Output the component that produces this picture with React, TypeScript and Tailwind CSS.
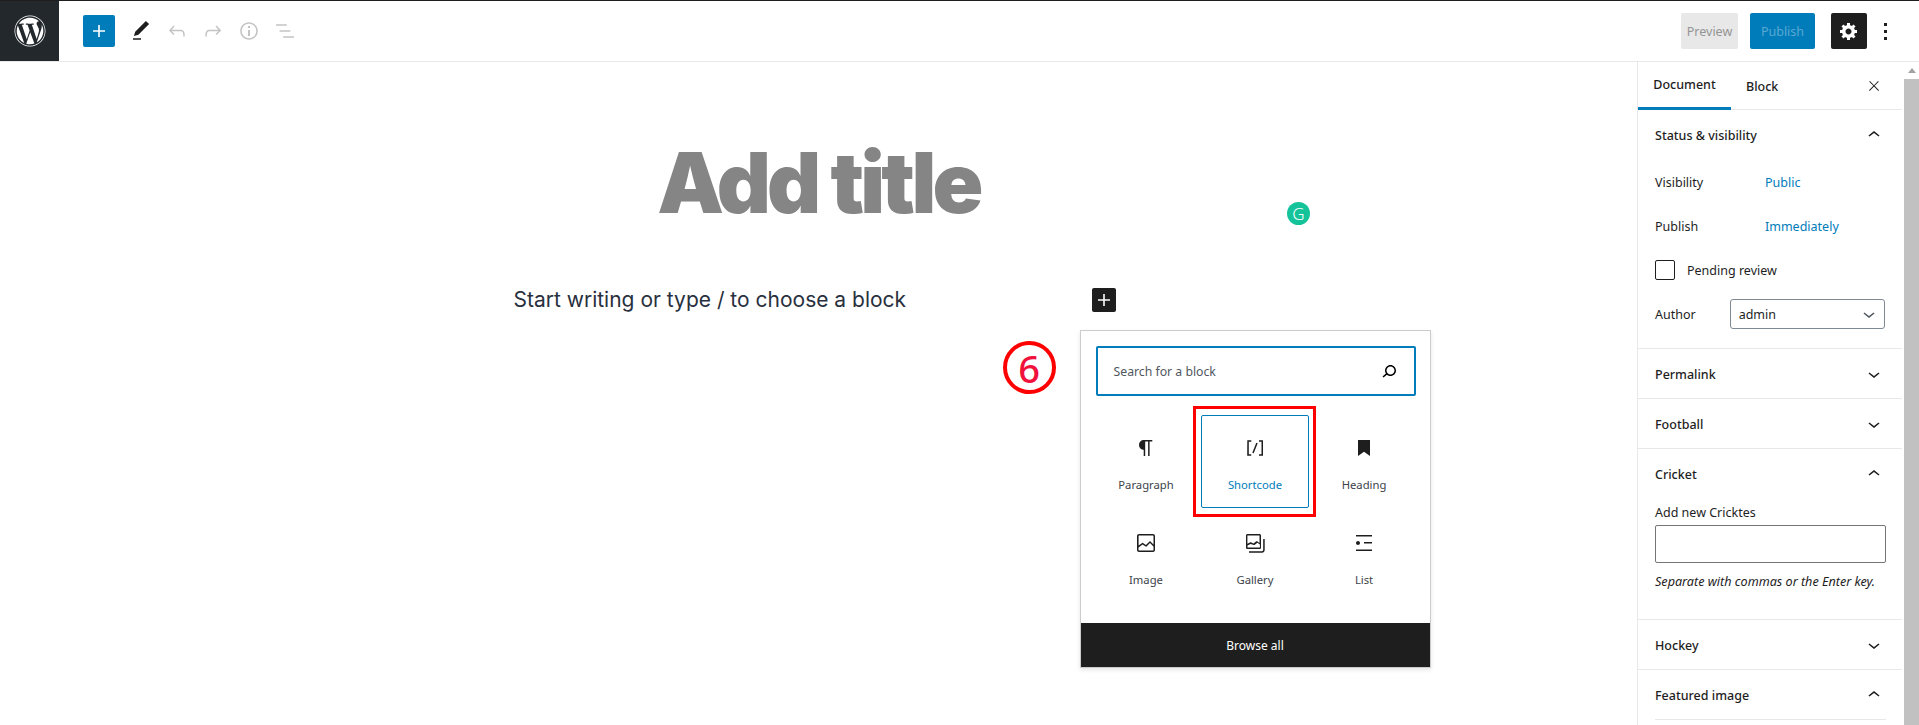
import React from 'react';
import { FaWordpress } from 'react-icons/fa';

const Icon = ({ d, size = 24, className = '' }: { d: string; size?: number; className?: string }) => (
  <svg viewBox="0 0 24 24" width={size} height={size} fill="currentColor" className={className}>
    <path d={d} />
  </svg>
);

const paths = {
  plus: 'M18 11.2h-5.2V6h-1.6v5.2H6v1.6h5.2V18h1.6v-5.2H18z',
  pen: 'M20.1 5.1L16.9 2 6.2 12.7l-1.3 4.4 4.5-1.3L20.1 5.1zM4 20.8h8v-1.5H4v1.5z',
  undo: 'M18.3 11.7c-.6-.6-1.4-.9-2.3-.9H6.7l2.9-3.3-1.1-1-4.5 5L8.5 16l1-1-2.7-2.7H16c.5 0 .9.2 1.3.5 1 1 1 3.4 1 4.5v.3h1.5v-.2c0-1.5 0-4.3-1.5-5.7z',
  redo: 'M15.6 6.5l-1.1 1 2.9 3.3H8c-.9 0-1.7.3-2.3.9-1.4 1.5-1.4 4.2-1.4 5.6v.2h1.5v-.3c0-1.1 0-3.5 1-4.5.3-.3.7-.5 1.3-.5h9.2L14.5 15l1.1 1.1 4.6-4.6-4.6-5z',
  info: 'M12 3.2c-4.8 0-8.8 3.9-8.8 8.8 0 4.8 3.9 8.8 8.8 8.8 4.8 0 8.8-3.9 8.8-8.8 0-4.8-4-8.8-8.8-8.8zm0 16c-4 0-7.2-3.3-7.2-7.2C4.8 8 8 4.8 12 4.8s7.2 3.3 7.2 7.2c0 4-3.2 7.2-7.2 7.2zM11 17h2v-6h-2v6zm0-8h2V7h-2v2z',
  listView: 'M13.8 5.2H3v1.5h10.8V5.2zm-3.6 12v1.5H21v-1.5H10.2zm7.2-6H6.6v1.5h10.8v-1.5z',
  close: 'M13 11.8l6.1-6.3-1-1-6.1 6.2-6.1-6.2-1 1 6.1 6.3-6.5 6.7 1 1 6.5-6.6 6.5 6.6 1-1z',
  up: 'M6.5 12.4L12 8l5.5 4.4-.9 1.2L12 10l-4.5 3.6-1-1.2z',
  down: 'M17.5 11.6L12 16l-5.5-4.4.9-1.2L12 14l4.5-3.6 1 1.2z',
  search: 'M13.5 6C10.5 6 8 8.5 8 11.5c0 1.1.3 2.1.9 3l-3.4 3 1 1.1 3.4-2.9c1 .9 2.2 1.4 3.6 1.4 3 0 5.5-2.5 5.5-5.5C19 8.5 16.5 6 13.5 6zm0 9.5c-2.2 0-4-1.8-4-4s1.8-4 4-4 4 1.8 4 4-1.8 4-4 4z',
  paragraph: 'M18.3 4H9.9v-.1l-.9.2c-2.3.4-4 2.4-4 4.8s1.7 4.4 4 4.8l.7.1V20h1.5V5.5h2.9V20h1.5V5.5h2.7V4z',
  shortcode: 'M16 4.2v1.5h2.5v12.5H16v1.5h4V4.2h-4zM4.2 19.8h4v-1.5H5.8V5.8h2.5V4.2h-4l-.1 15.6zm5.1-3.1l1.4.6 4-10-1.4-.6-4 10z',
  heading: 'M6 4h12v16l-6-4.2L6 20z',
  image: 'M19 3H5c-1.1 0-2 .9-2 2v14c0 1.1.9 2 2 2h14c1.1 0 2-.9 2-2V5c0-1.1-.9-2-2-2zM5 4.5h14c.3 0 .5.2.5.5v8.4l-3-2.9c-.3-.3-.8-.3-1 0L11.9 14 9 12c-.3-.2-.6-.2-.8 0l-3.6 2.6V5c-.1-.3.1-.5.4-.5zm14 15H5c-.3 0-.5-.2-.5-.5v-2.4l4.1-3 3 1.9c.3.2.7.2.9-.1L16 12l3.5 3.4V19c0 .3-.2.5-.5.5z',
  gallery: 'M20.2 8v11c0 .7-.6 1.2-1.2 1.2H6v1.5h13c1.5 0 2.7-1.2 2.7-2.8V8zM18 16.4V4.6c0-.9-.7-1.6-1.6-1.6H4.6C3.7 3 3 3.7 3 4.6v11.8c0 .9.7 1.6 1.6 1.6h11.8c.9 0 1.6-.7 1.6-1.6zM4.5 4.6c0-.1.1-.1.1-.1h11.8c.1 0 .1.1.1.1V12l-2.3-1.7c-.3-.2-.6-.2-.9 0l-2.9 2.1L8 11.3c-.2-.1-.5-.1-.7 0l-2.9 1.5V4.6zm.1 12c-.1 0-.1-.1-.1-.1v-2l3.1-1.6 3.2 1.1c.2.1.5.1.7-.1l2.9-2.1 2.5 1.8v2.8c0 .1-.1.1-.1.1H4.6z',
  list: 'M4 4v1.5h16V4H4zm8 8.5h8V11h-8v1.5zM4 20h16v-1.5H4V20zm4-8c0-1.1-.9-2-2-2s-2 .9-2 2 .9 2 2 2 2-.9 2-2z',
  cog: 'M18 12h-2.18c-.17.7-.44 1.35-.81 1.93l1.54 1.54-2.1 2.1-1.54-1.54c-.58.36-1.23.63-1.91.79V19H8v-2.18c-.68-.16-1.33-.43-1.91-.79l-1.54 1.54-2.12-2.12 1.54-1.54c-.36-.58-.63-1.23-.79-1.91H1V9.03h2.17c.16-.7.44-1.35.8-1.94L2.43 5.55l2.1-2.1 1.54 1.54c.58-.37 1.24-.64 1.93-.81V2h3v2.18c.68.16 1.33.43 1.91.79l1.54-1.54 2.12 2.12-1.54 1.54c.36.59.64 1.24.8 1.94H18V12zm-8.5 1.5c1.66 0 3-1.34 3-3s-1.34-3-3-3-3 1.34-3 3 1.34 3 3 3z',
};

const blocks = [
  { name: 'Paragraph', icon: paths.paragraph },
  { name: 'Shortcode', icon: paths.shortcode, active: true },
  { name: 'Heading', icon: paths.heading },
  { name: 'Image', icon: paths.image },
  { name: 'Gallery', icon: paths.gallery },
  { name: 'List', icon: paths.list },
];

const Toolbar = () => (
  <header className="flex h-[61px] shrink-0 items-center border-b border-[#e8e8e8] bg-white">
    <div className="flex h-[60px] w-[59px] items-center justify-center bg-[#23282d] text-white">
      <FaWordpress size={32} />
    </div>
    <button className="ml-6 flex h-8 w-8 items-center justify-center rounded-[2px] bg-[#007cba] text-white">
      <Icon d={paths.plus} />
    </button>
    <Icon d={paths.pen} className="ml-[14px] text-[#1e1e1e]" />
    <div className="ml-3 flex items-center gap-3 text-[#c4c4c4]">
      <Icon d={paths.undo} />
      <Icon d={paths.redo} />
      <Icon d={paths.info} />
      <Icon d={paths.listView} />
    </div>
    <div className="ml-auto flex items-center">
      <button className="flex h-9 w-[57px] items-center justify-center rounded-[2px] bg-[#e8e8e8] pt-[3px] text-[12.5px] text-[#949494]">Preview</button>
      <button className="ml-3 flex h-9 w-[65px] items-center justify-center rounded-[2px] bg-[#007cba] pt-[3px] text-[12.5px] text-[#5ba8d2]">Publish</button>
      <button className="ml-4 flex h-9 w-9 items-center justify-center rounded-[2px] bg-[#1e1e1e] text-white">
        <svg viewBox="0 0 20 20" width="20" height="20" fill="currentColor"><path d={paths.cog} /></svg>
      </button>
      <div className="ml-[17px] mr-8 flex flex-col gap-[4px]">
        <span className="h-[3px] w-[3px] bg-[#1e1e1e]" />
        <span className="h-[3px] w-[3px] bg-[#1e1e1e]" />
        <span className="h-[3px] w-[3px] bg-[#1e1e1e]" />
      </div>
    </div>
  </header>
);

const BlockPopover = () => (
  <div className="absolute left-[566px] top-[42px] w-[351px] border border-[#cccccc] bg-white shadow-[0_2px_4px_rgba(0,0,0,0.1)]">
    <div className="pl-[15px] pr-[14px] pt-[15px]">
      <div className="flex h-[50px] items-center justify-between rounded-[2px] border-2 border-[#007cba] pl-4 pr-[13px]">
        <span className="pt-[2px] text-[12.25px] text-[#50575e]">Search for a block</span>
        <Icon d={paths.search} />
      </div>
    </div>
    <div className="grid grid-cols-[repeat(3,109px)] gap-y-[2px] pl-[11px] pt-[19px] pb-[20px]">
      {blocks.map((b) => (
        <div key={b.name} className="relative flex h-[93px] flex-col items-center pt-[21px]">
          {b.active && (
            <>
              <div className="absolute left-0 right-[1px] inset-y-0 rounded-[2px] border border-[#007cba]" />
              <div className="absolute -left-[8px] -right-[6px] -inset-y-[9px] border-[3px] border-[#ff0000]" />
            </>
          )}
          <Icon d={b.icon} className="text-[#1e1e1e]" />
          <span className={`mt-[16px] text-[11.25px] leading-[18px] ${b.active ? 'text-[#007cba]' : 'text-[#3c434a]'}`}>{b.name}</span>
        </div>
      ))}
    </div>
    <div className="flex h-11 items-center justify-center bg-[#1e1e1e] pt-[2px] text-[12px] text-white">Browse all</div>
    <div className="absolute left-[-78px] top-[10px] flex h-[53px] w-[53px] items-center justify-center rounded-full border-4 border-[#ff0000] bg-white text-[38px] font-medium leading-none text-[#f0123c]">6</div>
  </div>
);

const Editor = () => (
  <main className="relative min-w-0 flex-1 overflow-hidden">
    <h1 className="mt-[75px] text-center font-['Inter',sans-serif] text-[84px] font-black leading-[92px] tracking-[-0.045em] text-[#858585]">Add title</h1>
    <div className="absolute left-[1287px] top-[140px] flex h-[23px] w-[23px] items-center justify-center rounded-full bg-[#15c39a] text-[17px] font-light leading-none text-white">G</div>
    <div className="relative mx-auto mt-[59px] flex w-[610px] items-center justify-between pr-[7.5px]">
      <p className="font-['Inter',sans-serif] text-[21px] leading-[24px] text-[#28303d]">Start writing or type / to choose a block</p>
      <button className="flex h-6 w-6 items-center justify-center rounded-[2px] bg-[#1e1e1e] text-white">
        <Icon d={paths.plus} />
      </button>
      <BlockPopover />
    </div>
  </main>
);

const PanelHeader = ({ title, open }: { title: string; open?: boolean }) => (
  <div className="flex h-[49px] items-center justify-between pl-[17px] pr-[16px] text-[12.5px] font-medium text-[#1e1e1e]">
    <span className="pt-[3px]">{title}</span>
    <Icon d={open ? paths.up : paths.down} />
  </div>
);

const Sidebar = () => (
  <aside className="flex w-[265px] shrink-0 flex-col border-l border-[#e8e8e8] bg-white text-[12.5px] text-[#1e1e1e]">
    <div className="flex h-[48px] shrink-0 items-center border-b border-[#e8e8e8]">
      <div className="flex h-[48px] w-[93px] items-center justify-center border-b-[3px] border-[#007cba] pt-[3px] font-medium">Document</div>
      <div className="ml-[15px] pt-[3px] font-medium">Block</div>
      <Icon d={paths.close} size={16} className="ml-auto mr-5" />
    </div>
    <section className="h-[239px] shrink-0 border-b border-[#e8e8e8]">
      <PanelHeader title="Status & visibility" open />
      <div className="mt-[11px] flex h-[24px] items-center px-[17px] pt-[2px]">
        <span className="w-[110px]">Visibility</span><span className="text-[#007cba]">Public</span>
      </div>
      <div className="mt-[20px] flex h-[24px] items-center px-[17px] pt-[2px]">
        <span className="w-[110px]">Publish</span><span className="text-[#007cba]">Immediately</span>
      </div>
      <div className="mt-[22px] flex h-[20px] items-center px-[17px]">
        <span className="h-5 w-5 rounded-[2px] border border-[#1e1e1e]" />
        <span className="ml-3 pt-[2px]">Pending review</span>
      </div>
      <div className="mt-[19px] flex items-center px-[17px]">
        <span className="w-[75px] pt-[2px]">Author</span>
        <div className="flex h-[30px] w-[156px] items-center justify-between rounded-[3px] border border-[#7e8993] pl-2 pr-[3px]">
          <span className="pt-[2px]">admin</span>
          <Icon d={paths.down} className="text-[#50575e]" />
        </div>
      </div>
    </section>
    <section className="shrink-0 border-b border-[#e8e8e8]"><PanelHeader title="Permalink" /></section>
    <section className="shrink-0 border-b border-[#e8e8e8]"><PanelHeader title="Football" /></section>
    <section className="h-[171px] shrink-0 border-b border-[#e8e8e8]">
      <PanelHeader title="Cricket" open />
      <div className="mt-[5px] px-[17px]">
        <div className="h-[18px] pt-px leading-[18px]">Add new Cricktes</div>
        <div className="mt-[4px] h-[38px] w-[231px] rounded-[2px] border border-[#757575]" />
        <div className="mt-[10px] whitespace-nowrap text-[12.6px] italic leading-[18px] text-[#1e1e1e]">Separate with commas or the Enter key.</div>
      </div>
    </section>
    <section className="shrink-0 border-b border-[#e8e8e8]"><PanelHeader title="Hockey" /></section>
    <section className="shrink-0">
      <PanelHeader title="Featured image" open />
      <div className="ml-[17px] h-px w-[231px] bg-[#e8e8e8]" />
    </section>
  </aside>
);

const Scrollbar = () => (
  <div className="flex w-[17px] shrink-0 flex-col pl-[2px]">
    <div className="flex h-[17px] shrink-0 items-center justify-center">
      <span className="h-0 w-0 border-x-[4px] border-b-[5px] border-x-transparent border-b-[#a3a3a3]" />
    </div>
    <div className="flex-1 bg-[#c1c1c1]" />
  </div>
);

export default function App() {
  return (
    <div className="flex h-[725px] w-full flex-col overflow-hidden border-t border-[#1e1e1e] bg-white font-['Noto_Sans',sans-serif]">
      <Toolbar />
      <div className="flex min-h-0 flex-1">
        <Editor />
        <Sidebar />
        <Scrollbar />
      </div>
    </div>
  );
}
